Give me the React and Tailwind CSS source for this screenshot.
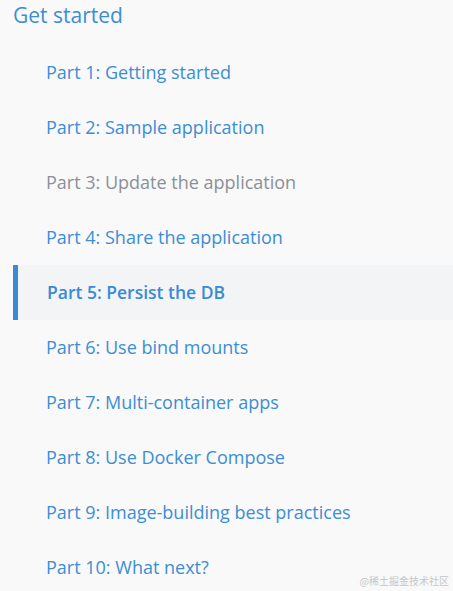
import React from 'react';

const parts = [
  { label: 'Part 1: Getting started' },
  { label: 'Part 2: Sample application' },
  { label: 'Part 3: Update the application', muted: true },
  { label: 'Part 4: Share the application' },
  { label: 'Part 5: Persist the DB', active: true },
  { label: 'Part 6: Use bind mounts' },
  { label: 'Part 7: Multi-container apps' },
  { label: 'Part 8: Use Docker Compose' },
  { label: 'Part 9: Image-building best practices' },
  { label: 'Part 10: What next?' },
];

const App = () => {
  return (
    <div className="relative w-[453px] h-[591px] overflow-hidden bg-[#f9f9fa] font-['Open_Sans',sans-serif]">
      <div className="h-[32px] pl-[13px] flex items-center text-[21px] text-[#3b8ed4]">
        Get started
      </div>
      <ul className="mt-[13px]">
        {parts.map((p) =>
          p.active ? (
            <li key={p.label} className="h-[55px] ml-[13px] flex items-center border-l-[5px] border-[#3a8ad6] bg-[#f2f4f6]">
              <span className="pl-[29px] text-[17.5px] font-semibold text-[#3a8ad6]">{p.label}</span>
            </li>
          ) : (
            <li
              key={p.label}
              className={`h-[55px] pl-[46px] flex items-center text-[18px] ${p.muted ? 'text-[#8a9098]' : 'text-[#3b8ed4]'}`}
            >
              {p.label}
            </li>
          )
        )}
      </ul>
      <div className="absolute right-[4px] bottom-[3px] text-[10px] text-[#c6c6c6] font-['Noto_Sans_CJK_SC',sans-serif]">
        @稀土掘金技术社区
      </div>
    </div>
  );
};

export default App;
